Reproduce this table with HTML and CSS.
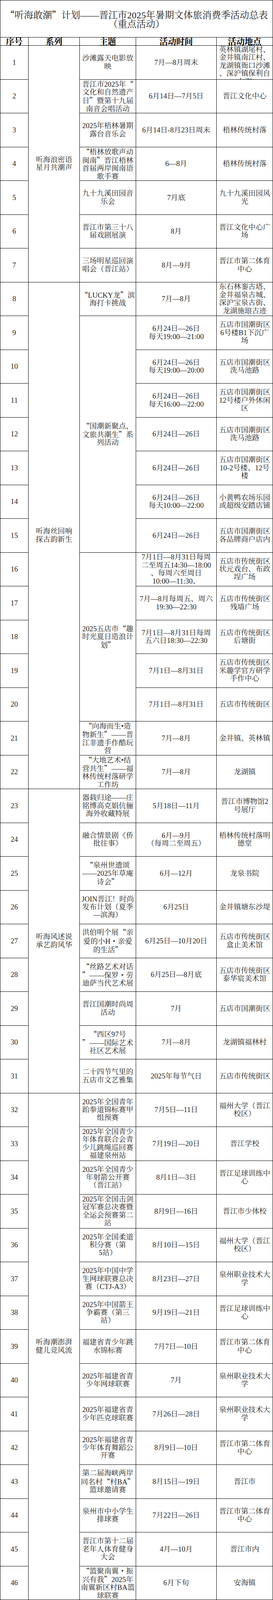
FILE: index.html
```html
<!DOCTYPE html>
<html lang="zh-CN">
<head>
<meta charset="utf-8">
<title>“听海敢潮”计划——晋江市2025年暑期文体旅消费季活动总表</title>
<link rel="stylesheet" href="styles.css">
</head>
<body>
<div class="sheet">
<div class="title"><p><span class="q">“</span>听海敢潮<span class="q">”</span>计划——晋江市2025年暑期文体旅消费季活动总表<br>（重点活动）</p></div>
<div class="hd">序号</div><div class="hd">系列</div><div class="hd">主题</div><div class="hd">活动时间</div><div class="hd">活动地点</div>

<div class="c"><p>1</p></div><div class="c rs7"><p>听海浪密语<br>星月共潮声</p></div><div class="c"><p>沙滩露天电影放<br>映</p></div><div class="c"><p>7月—8月周末</p></div><div class="c"><p>英林镇湖尾村、<br>金井镇南江村、<br>龙湖镇衙口沙滩<br>、深沪镇保利自<br>在海</p></div>
<div class="c"><p>2</p></div><div class="c"><p>晋江市2025年<span class="q">“</span><br>文化和自然遗产<br>日<span class="q">”</span>暨第十九届<br>南音会唱活动</p></div><div class="c"><p>6月14日—7月5日</p></div><div class="c"><p>晋江文化中心</p></div>
<div class="c"><p>3</p></div><div class="c"><p>2025年梧林暑期<br>露台音乐会</p></div><div class="c"><p>6月14日-8月23日周末</p></div><div class="c"><p>梧林传统村落</p></div>
<div class="c"><p>4</p></div><div class="c"><p><span class="q">“</span>梧林放歌声动<br>闽南<span class="q">”</span>晋江梧林<br>首届两岸闽南语<br>歌手赛</p></div><div class="c"><p>6—8月</p></div><div class="c"><p>梧林传统村落</p></div>
<div class="c"><p>5</p></div><div class="c"><p>九十九溪田园音<br>乐会</p></div><div class="c"><p>7月底</p></div><div class="c"><p>九十九溪田园风<br>光</p></div>
<div class="c"><p>6</p></div><div class="c"><p>晋江市第三十八<br>届戏剧展演</p></div><div class="c"><p>8月</p></div><div class="c"><p>晋江文化中心广<br>场</p></div>
<div class="c"><p>7</p></div><div class="c"><p>三场明星巡回演<br>唱会（晋江站）</p></div><div class="c"><p>8月—9月</p></div><div class="c"><p>晋江市第二体育<br>中心</p></div>

<div class="c"><p>8</p></div><div class="c rs15"><p>听海丝回响<br>探古韵新生</p></div><div class="c"><p><span class="q">“</span>LUCKY龙<span class="q">”</span>滨<br>海打卡挑战</p></div><div class="c"><p>7月—8月</p></div><div class="c"><p>东石林銮古塔、<br>金井福泉古城、<br>深沪宝泉古街、<br>龙湖施琅古迹</p></div>
<div class="c"><p>9</p></div><div class="c rs7"><p><span class="q">“</span>国潮新聚点，<br>文旅共潮生<span class="q">”</span>系<br>列活动</p></div><div class="c"><p>6月24日—26日<br>每天19:00—21:00</p></div><div class="c"><p>五店市国潮街区<br>6号楼B1下沉广<br>场</p></div>
<div class="c"><p>10</p></div><div class="c"><p>6月24日—26日<br>每天19:00—20:00</p></div><div class="c"><p>五店市国潮街区<br>洗马池路</p></div>
<div class="c"><p>11</p></div><div class="c"><p>6月24日—26日<br>每天16:00—22:00</p></div><div class="c"><p>五店市国潮街区<br>12号楼户外休闲<br>区</p></div>
<div class="c"><p>12</p></div><div class="c"><p>6月24日—26日</p></div><div class="c"><p>五店市国潮街区<br>洗马池路</p></div>
<div class="c"><p>13</p></div><div class="c"><p>6月24日—26日</p></div><div class="c"><p>五店市国潮街区<br>10-2号楼、12号<br>楼</p></div>
<div class="c"><p>14</p></div><div class="c"><p>6月24日—26日<br>每天10:00—22:00</p></div><div class="c"><p>小黄鸭农场乐园<br>或超级安踏店铺</p></div>
<div class="c"><p>15</p></div><div class="c"><p>6月24日—26日</p></div><div class="c"><p>五店市国潮街区<br>各品牌商户店内</p></div>
<div class="c"><p>16</p></div><div class="c rs5"><p>2025五店市<span class="q">“</span>趣<br>时光夏日造浪计<br>划<span class="q">”</span></p></div><div class="c"><p>7月1日—8月31日每周<br>二至周五14:30—18:00<br>、每周六至周日<br>10:00—11:30、</p></div><div class="c"><p>五店市传统街区<br>状元戏台、布政<br>埕广场</p></div>
<div class="c"><p>17</p></div><div class="c"><p>7月—8月每周五、周六<br>19:30—22:30</p></div><div class="c"><p>五店市传统街区<br>残墙广场</p></div>
<div class="c"><p>18</p></div><div class="c"><p>7月1日—8月31日每周<br>五六日18:30—22:30</p></div><div class="c"><p>五店市传统街区<br>后塘街</p></div>
<div class="c"><p>19</p></div><div class="c"><p>7月1日—8月31日</p></div><div class="c"><p>五店市传统街区<br>米趣学官方研学<br>手作中心</p></div>
<div class="c"><p>20</p></div><div class="c"><p>7月1日—8月31日</p></div><div class="c"><p>五店市传统街区</p></div>
<div class="c"><p>21</p></div><div class="c"><p><span class="q">“</span>向海而生•造<br>物新生<span class="q">”</span>——晋<br>江非遗手作酷玩<br>营</p></div><div class="c"><p>7月—8月</p></div><div class="c"><p>金井镇、英林镇</p></div>
<div class="c"><p>22</p></div><div class="c"><p><span class="q">“</span>大地艺术•结<br>营共生<span class="q">”</span>——福<br>林传统村落研学<br>工作坊</p></div><div class="c"><p>7月—8月</p></div><div class="c"><p>龙湖镇</p></div>

<div class="c"><p>23</p></div><div class="c rs9"><p>听海风述说<br>承艺韵风华</p></div><div class="c"><p>器载归途——庄<br>铭博高克娟伉俪<br>海外收藏特展</p></div><div class="c"><p>5月18日—11月</p></div><div class="c"><p>晋江市博物馆2<br>号展厅</p></div>
<div class="c"><p>24</p></div><div class="c"><p>融合情景剧《侨<br>批往事》</p></div><div class="c"><p>6月—9月<br>（每周二至周五）</p></div><div class="c"><p>梧林传统村落明<br>德堂</p></div>
<div class="c"><p>25</p></div><div class="c"><p><span class="q">“</span>泉州世遗颂<br>——2025年草庵<br>诗会<span class="q">”</span></p></div><div class="c"><p>6月—12月</p></div><div class="c"><p>龙泉书院</p></div>
<div class="c"><p>26</p></div><div class="c"><p>JOIN晋江！时尚<br>发布计划（夏季<br>—滨海）</p></div><div class="c"><p>6月25日</p></div><div class="c"><p>金井镇塘东沙堤</p></div>
<div class="c"><p>27</p></div><div class="c"><p>洪伯明个展<span class="q">“</span>亲<br>爱的小H<span class="q">·</span>亲爱<br>的生活<span class="q">”</span></p></div><div class="c"><p>6月25日—10月20日</p></div><div class="c"><p>五店市传统街区<br>盒止美术馆</p></div>
<div class="c"><p>28</p></div><div class="c"><p><span class="q">“</span>丝路艺术对话<br><span class="q">”</span>——保罗<span class="q">·</span>劳<br>迪萨当代艺术展</p></div><div class="c"><p>6月25日—8月底</p></div><div class="c"><p>五店市传统街区<br>泰华宸美术馆</p></div>
<div class="c"><p>29</p></div><div class="c"><p>晋江国潮时尚周<br>活动</p></div><div class="c"><p>7月</p></div><div class="c"><p>五店市国潮街区</p></div>
<div class="c"><p>30</p></div><div class="c"><p><span class="q">“</span>西区97号<br><span class="q">”</span>——国际艺术<br>社区艺术展</p></div><div class="c"><p>7月—8月</p></div><div class="c"><p>龙湖镇福林村</p></div>
<div class="c"><p>31</p></div><div class="c"><p>二十四节气里的<br>五店市文艺雅集</p></div><div class="c"><p>2025年每节气日</p></div><div class="c"><p>五店市传统街区</p></div>

<div class="c"><p>32</p></div><div class="c rs15"><p>听海潮澎湃<br>健儿竞风流</p></div><div class="c"><p>2025年全国青年<br>跆拳道锦标赛甲<br>组预赛</p></div><div class="c"><p>7月5日—11日</p></div><div class="c"><p>福州大学（晋江<br>校区）</p></div>
<div class="c"><p>33</p></div><div class="c"><p>2025年全国青少<br>年体育联合会青<br>少儿跳绳巡回赛<br>福建泉州站</p></div><div class="c"><p>7月19日—20日</p></div><div class="c"><p>晋江学校</p></div>
<div class="c"><p>34</p></div><div class="c"><p>2025年全国青少<br>年射箭公开赛<br>（晋江站）</p></div><div class="c"><p>8月1日—3日</p></div><div class="c"><p>晋江足球训练中<br>心</p></div>
<div class="c"><p>35</p></div><div class="c"><p>2025年全国击剑<br>冠军赛总决赛暨<br>全运会预赛第二<br>站</p></div><div class="c"><p>8月9日—16日</p></div><div class="c"><p>晋江市少体校</p></div>
<div class="c"><p>36</p></div><div class="c"><p>2025年全国柔道<br>积分赛（第<br>5站）</p></div><div class="c"><p>8月10日—15日</p></div><div class="c"><p>福州大学（晋江<br>校区）</p></div>
<div class="c"><p>37</p></div><div class="c"><p>2025年中国中学<br>生网球联赛总决<br>赛（CTJ-A3）</p></div><div class="c"><p>8月23日—27日</p></div><div class="c"><p>泉州职业技术大<br>学</p></div>
<div class="c"><p>38</p></div><div class="c"><p>2025年中国箭王<br>争霸赛（第三<br>站）</p></div><div class="c"><p>9月19日—21日</p></div><div class="c"><p>晋江足球训练中<br>心</p></div>
<div class="c"><p>39</p></div><div class="c"><p>福建省青少年跳<br>水锦标赛</p></div><div class="c"><p>7月7日—10日</p></div><div class="c"><p>晋江市第二体育<br>中心</p></div>
<div class="c"><p>40</p></div><div class="c"><p>2025年福建省青<br>少年网球联赛</p></div><div class="c"><p>7月</p></div><div class="c"><p>泉州职业技术大<br>学</p></div>
<div class="c"><p>41</p></div><div class="c"><p>2025年福建省青<br>少年匹克球联赛</p></div><div class="c"><p>7月26日—28日</p></div><div class="c"><p>泉州职业技术大<br>学</p></div>
<div class="c"><p>42</p></div><div class="c"><p>2025年福建省青<br>少年体育舞蹈公<br>开赛</p></div><div class="c"><p>8月9日—10日</p></div><div class="c"><p>晋江市第二体育<br>中心</p></div>
<div class="c"><p>43</p></div><div class="c"><p>第二届海峡两岸<br>同名村<span class="q">“</span>村BA<span class="q">”</span><br>篮球邀请赛</p></div><div class="c"><p>8月15日—19日</p></div><div class="c"><p>晋江市</p></div>
<div class="c"><p>44</p></div><div class="c"><p>泉州市中小学生<br>排球赛</p></div><div class="c"><p>7月22日—26日</p></div><div class="c"><p>晋江市第二体育<br>中心</p></div>
<div class="c"><p>45</p></div><div class="c"><p>晋江市第十二届<br>老年人体育健身<br>大会</p></div><div class="c"><p>4月—10月</p></div><div class="c"><p>晋江市内</p></div>
<div class="c"><p>46</p></div><div class="c"><p><span class="q">“</span>篮聚南翼<span class="q">·</span>振<br>兴有我<span class="q">”</span>2025年<br>南翼新区村BA篮<br>球联赛</p></div><div class="c"><p>6月下旬</p></div><div class="c"><p>安海镇</p></div>
</div>
</body>
</html>
```

FILE: styles.css
```css
html, body {
  margin: 0;
  padding: 0;
  background: #ffffff;
}

/* The photo frame of this sandbox is 4096px tall, so the sheet keeps the
   reference's proportions at 4096/5020 of its height. */
.sheet {
  display: grid;
  grid-template-columns: 72px 131px 144px 206px 144px;
  grid-template-rows: 95px 21px repeat(46, 86.5px);
  width: 697px;
  border-left: 1px solid #000000;
  border-top: 1px solid #000000;
  font-family: "Liberation Serif", "Noto Serif CJK SC", "Noto Sans CJK SC", serif;
  color: #222222;
}

.sheet p {
  margin: 0;
}

.q {
  font-family: "Noto Sans CJK SC", sans-serif;
}

.title,
.hd,
.c {
  box-sizing: border-box;
  border-right: 1px solid #000000;
  border-bottom: 1px solid #000000;
  display: flex;
  justify-content: center;
  text-align: center;
}

.title {
  grid-column: 1 / -1;
  align-items: center;
  font-size: 24px;
  line-height: 23px;
  padding-top: 3px;
}

.hd {
  align-items: center;
  font-size: 21.33px;
  line-height: 20px;
  font-weight: bold;
  color: #000000;
  padding-top: 1px;
}

.c {
  overflow: hidden;
  align-items: safe center;
  padding: 0 1px;
  font-size: 18.67px;
  line-height: 20.4px;
}

.c > p {
  flex: 1 1 auto;
  min-width: 0;
  white-space: nowrap;
}

.rs5 { grid-row: span 5; }
.rs7 { grid-row: span 7; }
.rs9 { grid-row: span 9; }
.rs15 { grid-row: span 15; }
```
